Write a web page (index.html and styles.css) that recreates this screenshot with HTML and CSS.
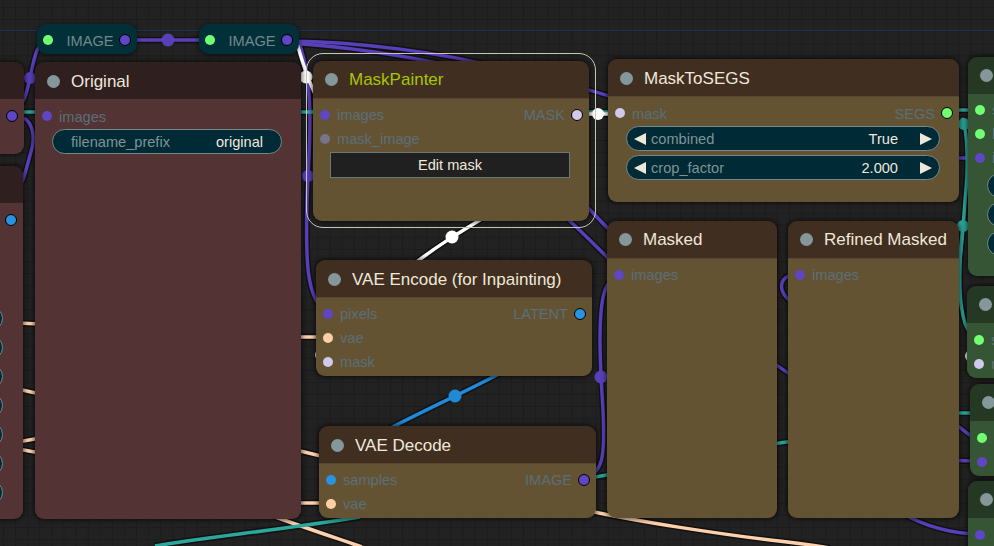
FILE: index.html
```html
<!DOCTYPE html>
<html lang="en">
<head>
    <meta charset="UTF-8">
    <title>MaskPainter workflow</title>
    <link rel="stylesheet" href="styles.css">
</head>
<body>
    <div class="canvas">
        <div class="group-line"></div>

        <!-- Links between the nodes -->
        <svg class="wires" width="994" height="546" viewBox="0 0 994 546">
            <defs>
                <g id="purpleWires">
                    <path d="M125 40H211"/>
                    <path d="M48 40C36 42 34 60 30 78C26 96 24 104 12 115"/>
                    <path d="M24 118C34 124 35 140 31 152C28 162 26 172 22 182"/>
                    <path d="M287 41C360 42 440 52 500 68C540 78 580 86 612 97"/>
                    <path d="M287 43C340 46 400 54 470 70"/>
                    <path d="M299 44C306 60 310 90 310 120C310 150 308 170 307 200C306 250 304 300 328 313"/>
                    <path d="M575 195C590 208 600 222 612 232"/>
                    <path d="M560 212C580 230 596 246 612 262"/>
                    <path d="M620 275C604 278 600 300 600 340C600 390 606 420 603 450C602 466 596 474 584 480"/>
                    <path d="M794 275C784 276 780 282 782 290C784 296 788 300 794 304"/>
                    <path d="M770 360C790 376 810 386 830 400"/>
                    <path d="M955 158H980"/>
                    <path d="M955 424C962 428 968 436 982 442"/>
                    <path d="M955 460C962 461 970 461 982 461"/>
                    <path d="M900 512C924 526 950 534 981 534"/>
                </g>
                <g id="whiteWires">
                    <path d="M296 40C302 60 308 84 325 114"/>
                    <path d="M400 275C430 250 460 232 490 214"/>
                    <path d="M585 114H610"/>
                </g>
                <g id="blueWires">
                    <path d="M385 431C420 412 470 390 510 368"/>
                </g>
                <g id="peachWires">
                    <path d="M18 323L40 324"/>
                    <path d="M18 389L40 394"/>
                    <path d="M18 442L40 438"/>
                    <path d="M18 449L40 453"/>
                    <path d="M296 337H325"/>
                    <path d="M296 450L325 457"/>
                    <path d="M296 503H325"/>
                    <path d="M270 515C300 526 330 536 362 547"/>
                    <path d="M590 511C640 522 720 534 770 540C790 542 805 544 830 548"/>
                </g>
                <g id="tealWires">
                    <path d="M20 112H40"/>
                    <path d="M296 112H325"/>
                    <path d="M580 112H615"/>
                    <path d="M155 546C200 538 280 530 360 517"/>
                    <path d="M590 478L612 474"/>
                    <path d="M772 444L794 441"/>
                    <path d="M955 110H980"/>
                    <path d="M955 413H975"/>
                    <path d="M962 118C968 130 968 170 966 190C964 210 964 220 963 226C960 250 958 290 962 310C964 322 966 330 975 338"/>
                    <path d="M963 226C962 250 958 265 956 300"/>
                </g>
            </defs>

            <use href="#purpleWires" class="wire-under"/>
            <use href="#peachWires" class="wire-under"/>
            <use href="#tealWires" class="wire-under"/>
            <use href="#whiteWires" class="wire-under"/>
            <use href="#blueWires" class="wire-under"/>
            <use href="#purpleWires" class="wire purple"/>
            <use href="#peachWires" class="wire peach"/>
            <use href="#tealWires" class="wire teal"/>
            <use href="#whiteWires" class="wire white"/>
            <use href="#blueWires" class="wire blue"/>

            <circle class="purple-fill" cx="168" cy="40" r="6.5"/>
            <circle class="purple-fill" cx="30" cy="78" r="6"/>
            <circle class="purple-fill" cx="308" cy="176" r="6"/>
            <circle class="purple-fill" cx="601" cy="377" r="6.5"/>
            <circle class="white-fill" cx="306" cy="77" r="6.5"/>
            <circle class="white-fill" cx="452" cy="237" r="6.5"/>
            <circle class="white-fill" cx="598" cy="114" r="6"/>
            <circle class="white-fill" cx="321" cy="355" r="6"/>
            <circle class="white-fill" cx="971" cy="356" r="6"/>
            <circle class="blue-fill" cx="455" cy="396" r="6.5"/>
            <circle class="teal-fill" cx="963" cy="226" r="6"/>
            <circle class="teal-fill" cx="964" cy="124" r="6"/>
        </svg>

        <!-- Reroutes -->
        <div class="reroute reroute-a">
            <span class="dot green"></span><span class="reroute-label">IMAGE</span><span class="dot purple out"></span>
        </div>
        <div class="reroute reroute-b">
            <span class="dot green"></span><span class="reroute-label">IMAGE</span><span class="dot purple out"></span>
        </div>

        <!-- Cut off at the left edge -->
        <div class="node red left-a">
            <div class="node-head"></div>
            <div class="node-body">
                <div class="slot"><span></span><span class="slot-side"><span class="dot purple out"></span></span></div>
            </div>
        </div>
        <div class="node red left-b">
            <div class="node-head"></div>
            <div class="node-body">
                <div class="slot"><span></span><span class="slot-side"><span class="dot blue out"></span></span></div>
                <div class="pin-list">
                    <span class="pin"></span><span class="pin"></span><span class="pin"></span><span class="pin"></span>
                    <span class="pin"></span><span class="pin"></span><span class="pin"></span>
                </div>
            </div>
        </div>

        <div class="node red original">
            <div class="node-head"><span class="status"></span><span class="title">Original</span></div>
            <div class="node-body">
                <div class="slot"><span class="slot-side"><span class="dot purple"></span><span class="slot-name">images</span></span></div>
                <div class="widget plain"><span class="widget-name">filename_prefix</span><span class="widget-value">original</span></div>
            </div>
        </div>

        <div class="selection"></div>
        <div class="node brown mask-painter">
            <div class="node-head"><span class="status"></span><span class="title lime">MaskPainter</span></div>
            <div class="node-body">
                <div class="slot">
                    <span class="slot-side"><span class="dot purple"></span><span class="slot-name">images</span></span>
                    <span class="slot-side"><span class="slot-name">MASK</span><span class="dot pale out"></span></span>
                </div>
                <div class="slot"><span class="slot-side"><span class="dot grey"></span><span class="slot-name">mask_image</span></span></div>
                <button class="edit-btn">Edit mask</button>
            </div>
        </div>

        <div class="node brown mask-to-segs">
            <div class="node-head"><span class="status"></span><span class="title">MaskToSEGS</span></div>
            <div class="node-body">
                <div class="slot">
                    <span class="slot-side"><span class="dot pale"></span><span class="slot-name">mask</span></span>
                    <span class="slot-side"><span class="slot-name">SEGS</span><span class="dot green out"></span></span>
                </div>
                <div class="widget">
                    <span class="arrow left"></span><span class="widget-name">combined</span>
                    <span class="widget-value">True</span><span class="arrow right"></span>
                </div>
                <div class="widget">
                    <span class="arrow left"></span><span class="widget-name">crop_factor</span>
                    <span class="widget-value">2.000</span><span class="arrow right"></span>
                </div>
            </div>
        </div>

        <div class="node brown masked">
            <div class="node-head"><span class="status"></span><span class="title">Masked</span></div>
            <div class="node-body">
                <div class="slot"><span class="slot-side"><span class="dot purple"></span><span class="slot-name">images</span></span></div>
            </div>
        </div>

        <div class="node brown refined">
            <div class="node-head"><span class="status"></span><span class="title">Refined Masked</span></div>
            <div class="node-body">
                <div class="slot"><span class="slot-side"><span class="dot purple"></span><span class="slot-name">images</span></span></div>
            </div>
        </div>

        <div class="node brown vae-encode">
            <div class="node-head"><span class="status"></span><span class="title">VAE Encode (for Inpainting)</span></div>
            <div class="node-body">
                <div class="slot">
                    <span class="slot-side"><span class="dot purple"></span><span class="slot-name">pixels</span></span>
                    <span class="slot-side"><span class="slot-name">LATENT</span><span class="dot blue out"></span></span>
                </div>
                <div class="slot"><span class="slot-side"><span class="dot peach"></span><span class="slot-name">vae</span></span></div>
                <div class="slot"><span class="slot-side"><span class="dot pale"></span><span class="slot-name">mask</span></span></div>
            </div>
        </div>

        <div class="node brown vae-decode">
            <div class="node-head"><span class="status"></span><span class="title">VAE Decode</span></div>
            <div class="node-body">
                <div class="slot">
                    <span class="slot-side"><span class="dot blue"></span><span class="slot-name">samples</span></span>
                    <span class="slot-side"><span class="slot-name">IMAGE</span><span class="dot purple out"></span></span>
                </div>
                <div class="slot"><span class="slot-side"><span class="dot peach"></span><span class="slot-name">vae</span></span></div>
            </div>
        </div>

        <!-- Cut off at the right edge -->
        <div class="node green-node right-a">
            <div class="node-head"><span class="status"></span></div>
            <div class="node-body">
                <div class="slot"><span class="slot-side"><span class="dot green"></span><span class="slot-name">s</span></span></div>
                <div class="slot"><span class="slot-side"><span class="dot green"></span><span class="slot-name">b</span></span></div>
                <div class="slot"><span class="slot-side"><span class="dot purple"></span><span class="slot-name">i</span></span></div>
                <div class="right-pins">
                    <span class="pin"></span><span class="pin"></span><span class="pin"></span>
                </div>
            </div>
        </div>
        <div class="node green-node right-b">
            <div class="node-head"><span class="status"></span></div>
            <div class="node-body">
                <div class="slot"><span class="slot-side"><span class="dot green"></span><span class="slot-name">s</span></span></div>
                <div class="slot"><span class="slot-side"><span class="dot pale"></span><span class="slot-name">n</span></span></div>
            </div>
        </div>
        <div class="node green-node right-c">
            <div class="node-head"><span class="status"></span></div>
            <div class="node-body">
                <div class="slot"><span class="slot-side"><span class="dot green"></span></span></div>
                <div class="slot"><span class="slot-side"><span class="dot purple"></span></span></div>
            </div>
        </div>
        <div class="node green-node right-d">
            <div class="node-head"><span class="status"></span></div>
            <div class="node-body">
                <div class="slot"><span class="slot-side"><span class="dot purple"></span></span></div>
            </div>
        </div>
    </div>
</body>
</html>
```

FILE: styles.css
```css
/* Canvas */
html, body {
    margin: 0;
    padding: 0;
    height: 100%;
    overflow: hidden;
}

body {
    font-family: "Liberation Sans", Arial, sans-serif;
    background-color: #222222;
}

.canvas {
    position: relative;
    width: 994px;
    height: 546px;
    overflow: hidden;
    background-color: #222222;
    background-image:
        linear-gradient(#1c1c1c 1px, transparent 1px),
        linear-gradient(90deg, #1c1c1c 1px, transparent 1px);
    background-size: 12.1px 12.1px;
    background-position: 3px 7px;
}

.group-line {
    position: absolute;
    left: 0;
    top: 30px;
    width: 100%;
    height: 1px;
    background-color: #1f3358;
}

/* Links */
.wires {
    position: absolute;
    left: 0;
    top: 0;
}

.wires path {
    fill: none;
}

.wire-under {
    stroke: #111111;
    stroke-width: 6.5;
}

.wire {
    stroke-width: 3.5;
}

.wire.purple { stroke: #5940bb; }
.wire.peach { stroke: #ffd0ac; }
.wire.teal { stroke: #2ba79b; }
.wire.white { stroke: #ffffff; }
.wire.blue { stroke: #2089d8; }

.purple-fill { fill: #5940bb; }
.white-fill { fill: #ffffff; }
.blue-fill { fill: #2089d8; }
.teal-fill { fill: #2ba79b; }

/* Reroute pills */
.reroute {
    position: absolute;
    top: 24px;
    width: 100px;
    height: 30px;
    box-sizing: border-box;
    padding: 2px 6px 0;
    display: flex;
    align-items: center;
    justify-content: space-between;
    background-color: #023039;
    border-radius: 10px;
    box-shadow: 0 1px 5px rgba(0, 0, 0, 0.6);
}

.reroute-a { left: 37px; }
.reroute-b { left: 199px; }

.reroute-label {
    font-size: 14.6px;
    color: #73878c;
    margin: 2px 0 0 8px;
}

/* Nodes */
.node {
    position: absolute;
    display: flex;
    flex-direction: column;
    border-radius: 9px;
    box-shadow: 0 0 5px 1px rgba(0, 0, 0, 0.65);
    overflow: hidden;
}

.node-head {
    height: 37px;
    flex-shrink: 0;
    box-sizing: border-box;
    padding-left: 12px;
    display: flex;
    align-items: center;
    gap: 11px;
}

.node-body {
    flex: 1;
    box-sizing: border-box;
    padding-top: 5px;
}

.original .node-head,
.mask-to-segs .node-head,
.vae-encode .node-head,
.vae-decode .node-head {
    padding-top: 2px;
}

.red .node-head { background-color: #2f1f1f; }
.red .node-body { background-color: #533333; }
.brown .node-head { background-color: #402e20; }
.brown .node-body { background-color: #635333; border-top: 1px solid #574630; padding-top: 4px; }
.green-node .node-head { background-color: #253823; }
.green-node .node-body { background-color: #355535; }

.status {
    width: 13px;
    height: 13px;
    border-radius: 50%;
    background-color: #84979a;
    flex-shrink: 0;
}

.title {
    font-size: 17px;
    color: #efe8da;
    white-space: nowrap;
}

.title.lime {
    color: #a9c400;
}

/* Slots */
.slot {
    height: 24px;
    box-sizing: border-box;
    padding: 0 6px 0 7px;
    display: flex;
    align-items: center;
    justify-content: space-between;
}

.slot-side {
    display: flex;
    align-items: center;
    gap: 6px;
}

.slot-name {
    font-size: 14.6px;
    color: #5b6f78;
}

.dot + .slot-name {
    margin-left: 1px;
}

.original .slot-name,
.mask-to-segs .slot-name {
    padding-top: 2px;
}

.dot {
    width: 10px;
    height: 10px;
    border-radius: 50%;
    flex-shrink: 0;
}

.dot.out {
    border: 1.5px solid #000000;
}

.dot.green { background-color: #72ff72; }
.dot.purple { background-color: #5f46c4; }
.dot.blue { background-color: #2a93e0; }
.dot.peach { background-color: #ffcfa8; }
.dot.pale { background-color: #cfcaec; }
.dot.grey { background-color: #77748a; }

/* Widgets */
.widget {
    height: 25px;
    box-sizing: border-box;
    margin: 1px 19px 4px 18px;
    padding: 0 7px;
    display: flex;
    align-items: center;
    background-color: #002a36;
    border: 1.5px solid #738888;
    border-radius: 13px;
    font-size: 14.6px;
}

.widget.plain {
    margin-left: 17px;
    padding: 0 18px;
    justify-content: space-between;
}

.widget-name {
    color: #7f9394;
}

.widget-value {
    margin-left: auto;
    color: #efe8da;
}

.arrow {
    width: 0;
    height: 0;
    border-top: 6.5px solid transparent;
    border-bottom: 6.5px solid transparent;
}

.arrow.left {
    border-right: 12px solid #efe8da;
    margin-right: 5px;
}

.arrow.right {
    border-left: 12px solid #efe8da;
    margin-left: 22px;
}

.edit-btn {
    display: block;
    width: 240px;
    height: 26px;
    margin: 1px 0 0 17px;
    padding: 0;
    font-family: inherit;
    font-size: 14.6px;
    color: #efe8da;
    background-color: #202020;
    border: 1.5px solid #677a76;
}

/* Where each node sits on the canvas */
.selection {
    position: absolute;
    left: 306px;
    top: 53px;
    width: 290px;
    height: 175px;
    box-sizing: border-box;
    border: 1.5px solid #c9c8b8;
    border-radius: 17px;
}

.left-a { left: -100px; top: 62px; width: 124px; height: 92px; }
.left-b { left: -100px; top: 166px; width: 123px; height: 353px; }
.original { left: 35px; top: 62px; width: 266px; height: 457px; }
.mask-painter { left: 313px; top: 61px; width: 276px; height: 160px; }
.mask-to-segs { left: 608px; top: 59px; width: 351px; height: 143px; }
.masked { left: 607px; top: 221px; width: 170px; height: 297px; }
.refined { left: 788px; top: 221px; width: 171px; height: 297px; }
.vae-encode { left: 316px; top: 260px; width: 276px; height: 116px; }
.vae-decode { left: 319px; top: 426px; width: 277px; height: 92px; }
.right-a { left: 968px; top: 57px; width: 120px; height: 219px; }
.right-b { left: 967px; top: 286px; width: 120px; height: 92px; }
.right-c { left: 970px; top: 384px; width: 120px; height: 92px; }
.right-d { left: 968px; top: 481px; width: 120px; height: 92px; }

.right-a .node-body {
    padding-top: 4px;
}

/* Bits of widgets that show at the screen edges */
.pin-list {
    display: flex;
    flex-direction: column;
    align-items: flex-end;
    gap: 4px;
    margin: 74px 20px 0 0;
}

.pin {
    display: block;
    width: 40px;
    height: 25px;
    box-sizing: border-box;
    background-color: #002a36;
    border: 1.5px solid #738888;
    border-radius: 13px;
}

.right-pins {
    display: flex;
    flex-direction: column;
    gap: 4px;
    margin: 3px 0 0 19px;
}
```
